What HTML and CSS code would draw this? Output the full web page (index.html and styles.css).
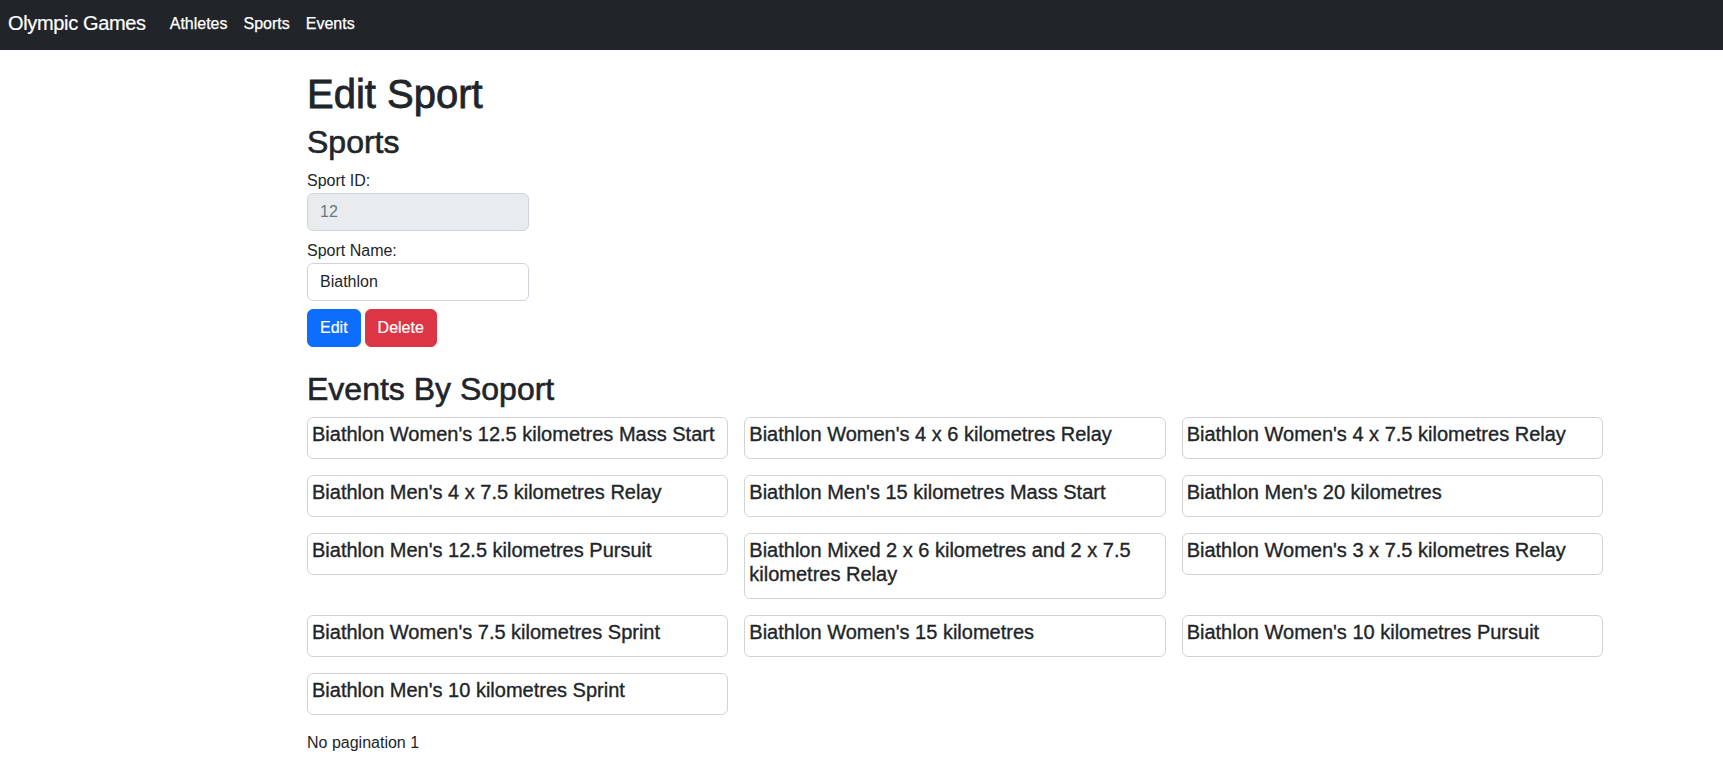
FILE: index.html
```html
<!DOCTYPE html>
<html lang="en">
<head>
<meta charset="utf-8">
<title>Edit Sport</title>
<link rel="stylesheet" href="styles.css">
</head>
<body>
<nav class="navbar">
  <a class="brand" href="#">Olympic Games</a>
  <ul class="nav-links">
    <li><a href="#">Athletes</a></li>
    <li><a href="#">Sports</a></li>
    <li><a href="#">Events</a></li>
  </ul>
</nav>
<main class="container">
  <h1 class="page-title">Edit Sport</h1>
  <h2 class="section-title">Sports</h2>
  <form class="sport-form">
    <div class="form-group">
      <label class="form-label" for="sid">Sport ID:</label>
      <input class="form-control" id="sid" type="text" value="12" disabled>
    </div>
    <div class="form-group">
      <label class="form-label" for="sname">Sport Name:</label>
      <input class="form-control" id="sname" type="text" value="Biathlon">
    </div>
    <div class="actions">
      <button type="button" class="btn btn-primary">Edit</button>
      <button type="button" class="btn btn-danger">Delete</button>
    </div>
  </form>
  <h2 class="section-title events-title">Events By Soport</h2>
  <div class="event-grid">
    <div class="card"><h5 class="card-title">Biathlon Women's 12.5 kilometres Mass Start</h5></div>
    <div class="card"><h5 class="card-title">Biathlon Women's 4 x 6 kilometres Relay</h5></div>
    <div class="card"><h5 class="card-title">Biathlon Women's 4 x 7.5 kilometres Relay</h5></div>
    <div class="card"><h5 class="card-title">Biathlon Men's 4 x 7.5 kilometres Relay</h5></div>
    <div class="card"><h5 class="card-title">Biathlon Men's 15 kilometres Mass Start</h5></div>
    <div class="card"><h5 class="card-title">Biathlon Men's 20 kilometres</h5></div>
    <div class="card"><h5 class="card-title">Biathlon Men's 12.5 kilometres Pursuit</h5></div>
    <div class="card"><h5 class="card-title">Biathlon Mixed 2 x 6 kilometres and 2 x 7.5 kilometres Relay</h5></div>
    <div class="card"><h5 class="card-title">Biathlon Women's 3 x 7.5 kilometres Relay</h5></div>
    <div class="card"><h5 class="card-title">Biathlon Women's 7.5 kilometres Sprint</h5></div>
    <div class="card"><h5 class="card-title">Biathlon Women's 15 kilometres</h5></div>
    <div class="card"><h5 class="card-title">Biathlon Women's 10 kilometres Pursuit</h5></div>
    <div class="card"><h5 class="card-title">Biathlon Men's 10 kilometres Sprint</h5></div>
  </div>
  <p class="pagination">No pagination 1</p>
</main>
</body>
</html>
```
FILE: styles.css
```css
* { box-sizing: border-box; }

html, body {
  margin: 0;
  padding: 0;
  background: #fff;
}

body {
  font-family: "Liberation Sans", Arial, sans-serif;
  font-size: 16px;
  line-height: 24px;
  color: #212529;
}

.navbar {
  height: 50px;
  background: #212529;
  display: flex;
  align-items: center;
  padding: 0 8px;
}

.brand {
  color: #fff;
  font-size: 20px;
  line-height: 30px;
  letter-spacing: -0.35px;
  text-decoration: none;
  margin-right: 16px;
  margin-top: -4px;
  -webkit-text-stroke: 0.2px #fff;
}

.nav-links {
  display: flex;
  list-style: none;
  margin: 0;
  padding: 0;
}

.nav-links a {
  display: block;
  color: #fff;
  text-decoration: none;
  font-size: 16px;
  line-height: 24px;
  padding: 0 8px;
  margin-top: -2px;
  -webkit-text-stroke: 0.25px #fff;
}

.container {
  width: 1603px;
  padding-left: 307px;
}

.page-title {
  font-size: 40px;
  line-height: 48px;
  font-weight: 500;
  margin: 20px 0 5px;
  -webkit-text-stroke: 0.8px #212529;
}

.section-title {
  font-size: 32px;
  line-height: 38.4px;
  font-weight: 500;
  margin: 0 0 8px;
  -webkit-text-stroke: 0.6px #212529;
}

.sport-form {
  width: 222px;
}

.form-group {
  margin-bottom: 8px;
}

.form-label {
  display: block;
  font-size: 16px;
  line-height: 24px;
}

.form-control {
  display: block;
  width: 100%;
  height: 38px;
  padding: 6px 12px;
  font-family: inherit;
  font-size: 16px;
  line-height: 24px;
  color: #212529;
  background: #fff;
  border: 1px solid #ced4da;
  border-radius: 6px;
  outline: none;
}

.form-control:disabled {
  background: #e9ecef;
  color: #6c757d;
}

.actions {
  display: flex;
  gap: 4px;
}

.btn {
  height: 38px;
  padding: 6px 12px;
  font-family: inherit;
  font-size: 16px;
  line-height: 24px;
  color: #fff;
  border: 1px solid transparent;
  border-radius: 6px;
  cursor: pointer;
  -webkit-text-stroke: 0.2px #fff;
}

.btn-primary { background: #0d6efd; border-color: #0d6efd; }
.btn-danger { background: #dc3545; border-color: #dc3545; }

.events-title {
  margin-top: 23px;
}

.event-grid {
  display: grid;
  grid-template-columns: repeat(3, 1fr);
  gap: 16px;
  align-items: start;
}

.card {
  border: 1px solid rgba(0, 0, 0, 0.175);
  border-radius: 6px;
  padding: 4px;
}

.card-title {
  font-size: 20px;
  line-height: 24px;
  font-weight: 500;
  margin: 0 0 8px;
  -webkit-text-stroke: 0.35px #212529;
}

.pagination {
  margin: 16px 0 0;
}
```
